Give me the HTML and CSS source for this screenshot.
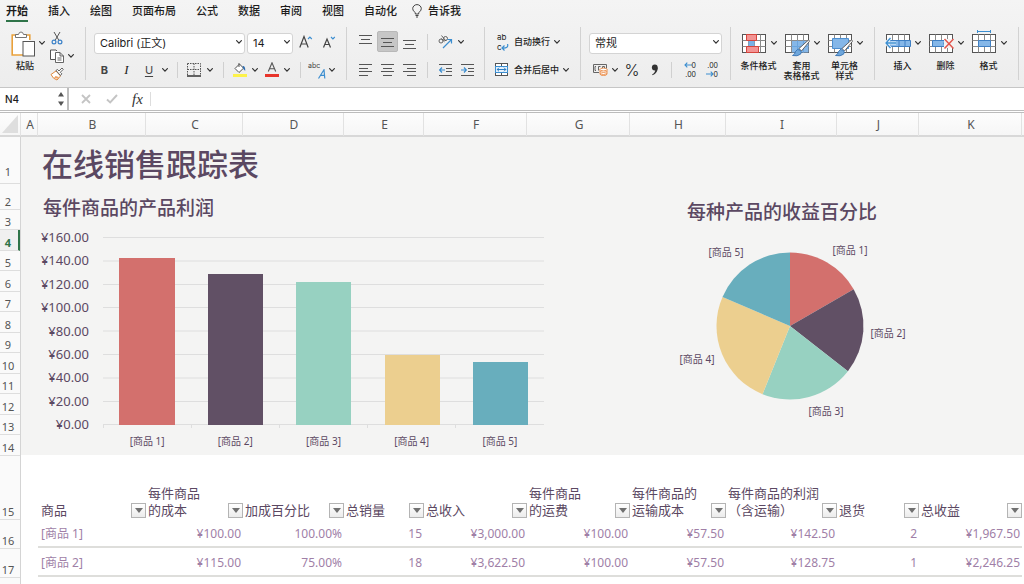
FILE: index.html
```html
<!DOCTYPE html>
<html lang="zh-CN">
<head>
<meta charset="utf-8">
<title>在线销售跟踪表</title>
<link rel="stylesheet" href="styles.css">
</head>
<body>
<svg class="defs" aria-hidden="true">
  <symbol id="chev" viewBox="0 0 6 4"><path d="M.6.6 3 3.1 5.4.6" fill="none" stroke="#333" stroke-width="1.2" stroke-linecap="round"/></symbol>
  <symbol id="table" viewBox="0 0 26 28">
    <rect x="1.5" y="5.5" width="23" height="18" fill="#fff" stroke="#555"/>
    <path d="M1.5 11.5h23M1.5 17.5h23M7.5 5.5v18M13.5 5.5v18M19.5 5.5v18" fill="none" stroke="#8a8a8a"/>
  </symbol>
  <symbol id="brush" viewBox="0 0 18 18">
    <path d="M16.5 1 7 9.5l2.500 2.500L17.300 2.500Q17.500 1 16.500 1z" fill="#fff" stroke="#555" stroke-width=".9"/>
    <path d="M.5 16.500Q3 15.500 3.500 12.500 5 9.500 8 11q2.500 2 .5 4.200-3 2.500-8 1.300z" fill="#6ea6db" stroke="#2f6cae" stroke-width=".8"/>
  </symbol>
</svg>

<header class="ribbon">
  <nav class="tabs">
    <button class="tab active">开始</button>
    <button class="tab">插入</button>
    <button class="tab">绘图</button>
    <button class="tab">页面布局</button>
    <button class="tab">公式</button>
    <button class="tab">数据</button>
    <button class="tab">审阅</button>
    <button class="tab">视图</button>
    <button class="tab">自动化</button>
    <button class="tab tell"><svg width="10" height="14" viewBox="0 0 10 14"><path d="M3.300 10V8.600Q.7 7 .7 4.700a4.300 4.100 0 0 1 8.600 0Q9.300 7 6.700 8.600V10zM3.500 11.500h3M4 13h2" fill="none" stroke="#444" stroke-width="1"/></svg>告诉我</button>
  </nav>

  <div class="groups">
    <section class="group clipboard" aria-label="剪贴板">
      <button class="big paste">
        <span class="pic">
          <svg width="24" height="28" viewBox="0 0 24 28"><path d="M1 6.500h18v20H1z" fill="#fff"/><path d="M7 6H1.200v20H12M13.500 6h5.300v5" fill="none" stroke="#e9a13b" stroke-width="1.600"/><path d="M4.500 8.500V5.500h3Q8 3 10 3t2.500 2.500h3v3z" fill="#fff" stroke="#666" stroke-width=".9"/><rect x="12" y="12.500" width="11.500" height="14.500" fill="#fff" stroke="#555"/></svg>
          <svg class="chev"><use href="#chev"/></svg>
        </span>
        <span class="label">粘贴</span>
      </button>
      <div class="clip-tools">
        <button class="tool" aria-label="剪切"><svg width="12" height="14" viewBox="0 0 12 14"><path d="M3 1 8 9.500M9 1 4 9.500" stroke="#555" fill="none"/><circle cx="3" cy="11" r="1.900" fill="none" stroke="#3c82c8" stroke-width="1.200"/><circle cx="9" cy="11" r="1.900" fill="none" stroke="#3c82c8" stroke-width="1.200"/></svg></button>
        <button class="tool" aria-label="复制"><svg width="14" height="14" viewBox="0 0 14 14"><path d="M5 10.500H.5V1H6l1 1" fill="#fff" stroke="#555"/><path d="M5.500 3.500h4.500l3.500 3.500v6.500h-8zM10 3.500V7h3.500M7.500 9h4M7.500 11h4" fill="#fff" stroke="#555" stroke-width=".9"/></svg></button>
        <button class="tool" aria-label="复制选项"><svg class="chev"><use href="#chev"/></svg></button>
        <button class="tool" aria-label="格式刷"><svg width="14" height="14" viewBox="0 0 14 14"><path d="M1 7.500 6 4l4.500 5L7 13Q3 12 1 7.500z" fill="#fff" stroke="#e0873a"/><path d="m4 11 4 .8 1-1.800-3.500-1z" fill="#eda366"/><path d="m6 3.500 1.500-1L9 4l3-3 1.300 1.300-3 3 1.500 1.500-1.300 1.700z" fill="#fff" stroke="#555" stroke-width=".9"/></svg></button>
      </div>
    </section>

    <section class="group font" aria-label="字体">
      <div class="row font-pick">
        <label class="picker"><select aria-label="字体"><option>Calibri (正文)</option></select><svg class="chev"><use href="#chev"/></svg></label>
        <label class="picker"><select aria-label="字号"><option>14</option></select><svg class="chev"><use href="#chev"/></svg></label>
        <button class="tool" aria-label="增大字号"><svg width="14" height="14" viewBox="0 0 14 14"><path d="M.8 12.500 5 1.500l4.200 11M2.300 9h5.400" fill="none" stroke="#444" stroke-width="1.200"/><path d="m9 4 1.900-2 1.900 2" fill="none" stroke="#3c8ed0" stroke-width="1.100"/></svg></button>
        <button class="tool" aria-label="减小字号"><svg width="14" height="14" viewBox="0 0 14 14"><path d="M1.500 12.500 5 4l3.500 8.500M2.700 9.500h4.600" fill="none" stroke="#444" stroke-width="1.200"/><path d="m9 2 1.900 2 1.900-2" fill="none" stroke="#3c8ed0" stroke-width="1.100"/></svg></button>
      </div>
      <div class="row font-style">
        <button class="tool bold">B</button>
        <button class="tool italic">I</button>
        <button class="tool underline">U</button>
        <button class="tool" aria-label="下划线选项"><svg class="chev"><use href="#chev"/></svg></button>
        <i class="sep"></i>
        <button class="tool" aria-label="边框"><svg width="14" height="14" viewBox="0 0 14 14"><path d="M.5.5h13v12M.5.5v12M.5 6.500h13M7 .5v12" fill="none" stroke="#555" stroke-dasharray="1.500 1"/><path d="M0 13h14" stroke="#333" stroke-width="1.500"/></svg></button>
        <button class="tool" aria-label="边框选项"><svg class="chev"><use href="#chev"/></svg></button>
        <i class="sep"></i>
        <button class="tool" aria-label="填充颜色"><svg width="14" height="15" viewBox="0 0 14 15"><path d="M2 6.500 6.500 2l4 4.200L6 10.500zM6 1v4" fill="#fff" stroke="#555"/><path d="M9.500 4q3-.5 2.700 5Q9.800 7 9.500 4z" fill="#2f6cae"/><path d="M0 12h14v3H0z" fill="#fdf24a"/></svg></button>
        <button class="tool" aria-label="填充选项"><svg class="chev"><use href="#chev"/></svg></button>
        <button class="tool" aria-label="字体颜色"><svg width="14" height="15" viewBox="0 0 14 15"><path d="M3.300 9.500 7 .8l3.700 8.700M4.500 6.800h5" fill="none" stroke="#555" stroke-width="1.100"/><path d="M0 12h14v3H0z" fill="#e8352b"/></svg></button>
        <button class="tool" aria-label="颜色选项"><svg class="chev"><use href="#chev"/></svg></button>
        <i class="sep"></i>
        <button class="tool phonetic" aria-label="拼音指南"><span>abc</span><svg width="8" height="10" viewBox="0 0 8 10"><path d="M.5 9.500 6 .8 6.800 9.500M2.500 6.300h4" fill="none" stroke="#3c8ed0" stroke-width="1.200"/></svg></button>
        <button class="tool" aria-label="拼音选项"><svg class="chev"><use href="#chev"/></svg></button>
      </div>
    </section>

    <section class="group align" aria-label="对齐方式">
      <div class="row align-top">
        <button class="tool" aria-label="顶端对齐"><svg width="13" height="14" viewBox="0 0 13 14"><path d="M0 .5h13M2 4.500h9M0 8.500h13" stroke="#555"/></svg></button>
        <button class="tool pressed" aria-label="垂直居中"><svg width="13" height="14" viewBox="0 0 13 14"><path d="M0 3.500h13M2 7.500h9M0 11.500h13" stroke="#555"/></svg></button>
        <button class="tool" aria-label="底端对齐"><svg width="13" height="14" viewBox="0 0 13 14"><path d="M0 5.500h13M2 9.500h9M0 13.500h13" stroke="#555"/></svg></button>
        <i class="sep"></i>
        <button class="tool" aria-label="方向"><svg width="15" height="14" viewBox="0 0 15 14"><g fill="none" stroke="#555" stroke-width=".9"><circle cx="3" cy="6" r="2"/><path d="m3.200 3.500 3.300 3.300"/><circle cx="7.500" cy="3.500" r="2"/><path d="M3.500.5 8 6"/></g><path d="M5 13 13.500 4.500M9.500 4.500h4v4" fill="none" stroke="#3c8ed0" stroke-width="1.200"/></svg></button>
        <button class="tool" aria-label="方向选项"><svg class="chev"><use href="#chev"/></svg></button>
      </div>
      <div class="row align-side">
        <button class="tool" aria-label="左对齐"><svg width="13" height="12" viewBox="0 0 13 12"><path d="M0 .5h13M0 4.500h9M0 7.500h13M0 11.500h9" stroke="#555"/></svg></button>
        <button class="tool" aria-label="居中"><svg width="13" height="12" viewBox="0 0 13 12"><path d="M0 .5h13M2 4.500h9M0 7.500h13M2 11.500h9" stroke="#555"/></svg></button>
        <button class="tool" aria-label="右对齐"><svg width="13" height="12" viewBox="0 0 13 12"><path d="M0 .5h13M4 4.500h9M0 7.500h13M4 11.500h9" stroke="#555"/></svg></button>
        <i class="sep"></i>
        <button class="tool" aria-label="减少缩进"><svg width="13" height="12" viewBox="0 0 13 12"><path d="M0 .5h13M7 4.500h6M7 7.500h6M0 11.500h13" stroke="#555"/><path d="M6 6H.8M3 3.500.7 6 3 8.500" fill="none" stroke="#3c8ed0" stroke-width="1.200"/></svg></button>
        <button class="tool" aria-label="增加缩进"><svg width="13" height="12" viewBox="0 0 13 12"><path d="M0 .5h13M7 4.500h6M7 7.500h6M0 11.500h13" stroke="#555"/><path d="M0 6h5.200M3 3.500 5.300 6 3 8.500" fill="none" stroke="#3c8ed0" stroke-width="1.200"/></svg></button>
      </div>
    </section>

    <section class="group wrap" aria-label="换行与合并">
      <div class="row"><button class="text-tool"><span class="wrap-icon"><span>ab</span><span>c</span><svg width="8" height="8" viewBox="0 0 8 8"><path d="M6.500 0q1.500 4.500-5.500 4M3.500 1.500 1 4l2.500 2.500" fill="none" stroke="#3c8ed0" stroke-width="1.200"/></svg></span>自动换行<svg class="chev"><use href="#chev"/></svg></button></div>
      <div class="row"><button class="text-tool"><svg width="17" height="13" viewBox="0 0 17 13"><rect x="2.500" y=".5" width="12" height="12" fill="#fff" stroke="#555"/><path d="M8.500 0v13" stroke="#555"/><rect x="2.500" y="3.500" width="12" height="6" fill="#e6f2fc" stroke="#3c8ed0"/><path d="M4 6.500h9M6 4.700 4.200 6.500 6 8.300M11 4.700l1.800 1.800L11 8.300" fill="none" stroke="#2f7fc4"/></svg>合并后居中<svg class="chev"><use href="#chev"/></svg></button></div>
    </section>

    <section class="group number" aria-label="数字">
      <div class="row number-pick"><label class="picker"><select aria-label="数字格式"><option>常规</option></select><svg class="chev"><use href="#chev"/></svg></label></div>
      <div class="row number-style">
        <button class="tool" aria-label="会计格式"><svg width="15" height="12" viewBox="0 0 15 12"><path d="M13.500 5V.5H.5v8H6M3 2.500H2v4h1M5.500 6.500v-4h2M9.500 4V2.500h2V4" fill="none" stroke="#666"/><g fill="#fff" stroke="#e9873f" stroke-width=".9"><path d="M7 5.500v4.500q0 1.500 3.500 1.500T14 10V5.500z"/><ellipse cx="10.500" cy="5.500" rx="3.500" ry="1.400"/><path d="M7 7.700q3.500 1.600 7 0M7 9.700q3.500 1.600 7 0" fill="none"/></g></svg></button>
        <button class="tool" aria-label="会计选项"><svg class="chev"><use href="#chev"/></svg></button>
        <button class="tool percent">%</button>
        <button class="tool" aria-label="千位分隔"><svg width="8" height="12" viewBox="0 0 8 12"><circle cx="3.800" cy="3.500" r="2.900" fill="#333"/><path d="M6.700 3.500Q7 9 1.500 11.200l-.4-.7Q4.500 8.500 4.200 5z" fill="#333"/></svg></button>
        <i class="sep"></i>
        <button class="tool decimals" aria-label="增加小数位数"><span><svg width="8" height="6" viewBox="0 0 8 6"><path d="M8 3H1M3.300.7 1 3l2.300 2.300" fill="none" stroke="#3c8ed0" stroke-width="1.100"/></svg>0</span><span>.00</span></button>
        <button class="tool decimals" aria-label="减少小数位数"><span>.00</span><span><svg width="8" height="6" viewBox="0 0 8 6"><path d="M0 3h7M4.700.7 7 3 4.700 5.300" fill="none" stroke="#3c8ed0" stroke-width="1.100"/></svg>0</span></button>
      </div>
    </section>

    <section class="group bigs" aria-label="样式">
      <button class="big">
        <span class="pic"><svg width="26" height="28" viewBox="0 0 26 28"><use href="#table"/><path d="M7.500 11.500h6v6h-6z" fill="#78b1e6"/><path d="M5.500 5.500h10v6h-10zM5.500 17.500h12v6h-12z" fill="#f29494" stroke="#d6453d"/></svg><svg class="chev"><use href="#chev"/></svg></span>
        <span class="label">条件格式</span>
      </button>
      <button class="big">
        <span class="pic"><svg width="26" height="28" viewBox="0 0 26 28"><use href="#table"/><path d="M8 12h16.500v11.500H8z" fill="#85b7e8"/><path d="M7.500 17.500h17M13.500 11.500v12M19.500 11.500v12" stroke="#6ba5de"/><use href="#brush" x="8" y="10" width="18" height="18"/></svg><svg class="chev"><use href="#chev"/></svg></span>
        <span class="label">套用<br>表格格式</span>
      </button>
      <button class="big">
        <span class="pic"><svg width="26" height="28" viewBox="0 0 26 28"><use href="#table"/><path d="M5.500 9.500h16v10h-16z" fill="#85b7e8" stroke="#4d8fd0"/><use href="#brush" x="8" y="10" width="18" height="18"/></svg><svg class="chev"><use href="#chev"/></svg></span>
        <span class="label">单元格<br>样式</span>
      </button>
    </section>

    <section class="group bigs" aria-label="单元格">
      <button class="big">
        <span class="pic"><svg width="26" height="28" viewBox="0 0 26 28"><use href="#table"/><path d="M5 11.500h20.500v6H5z" fill="#85b7e8" stroke="#3e7fc4"/><path d="M14 11.500v6M20 11.500v6" stroke="#3e7fc4"/><path d="M5.500 9 1 14l4.500 5M1 14h10" fill="none" stroke="#eef6fd" stroke-width="3"/><path d="M5.500 9 1 14l4.500 5M1 14h10" fill="none" stroke="#3c8ed0" stroke-width="1.300"/></svg><svg class="chev"><use href="#chev"/></svg></span>
        <span class="label">插入</span>
      </button>
      <button class="big">
        <span class="pic"><svg width="26" height="28" viewBox="0 0 26 28"><use href="#table"/><path d="M4.500 11.500h13l-2 3 2 3h-13z" fill="#85b7e8" stroke="#3e7fc4"/><path d="M16 10h10v9H16z" fill="#f3f3f3"/><path d="m16.500 10 9 9.500M25.500 10l-9 9.500" stroke="#e2544b" stroke-width="1.500"/></svg><svg class="chev"><use href="#chev"/></svg></span>
        <span class="label">删除</span>
      </button>
      <button class="big">
        <span class="pic"><svg width="26" height="28" viewBox="0 0 26 28"><use href="#table"/><path d="M7.500 11.500h12v6h-12z" fill="#85b7e8" stroke="#3e7fc4"/><path d="M6.500 2.500h13M6.500 1v3M19.500 1v3" stroke="#3c8ed0"/></svg><svg class="chev"><use href="#chev"/></svg></span>
        <span class="label">格式</span>
      </button>
    </section>
  </div>
</header>

<div class="formula-bar">
  <div class="name-box">
    <input type="text" value="N4" aria-label="名称框">
    <svg width="6" height="14" viewBox="0 0 6 14"><path d="M3 0 6 4.500H0zM3 14 6 9.500H0z" fill="#555"/></svg>
  </div>
  <button class="tool" aria-label="取消"><svg width="10" height="10" viewBox="0 0 10 10"><path d="m1 1 8 8M9 1 1 9" stroke="#c4c4c4" stroke-width="1.800"/></svg></button>
  <button class="tool" aria-label="输入"><svg width="12" height="10" viewBox="0 0 12 10"><path d="m1 5.500 3.200 3L11 1" fill="none" stroke="#c4c4c4" stroke-width="1.900"/></svg></button>
  <button class="tool fx">fx</button>
  <input class="formula" type="text" aria-label="编辑栏">
</div>

<main class="sheet">
  <div class="col-heads">
    <span class="corner"><svg width="16" height="18" viewBox="0 0 16 18"><path d="M16 0v18H0z" fill="#dedede"/></svg></span>
    <span>A</span><span>B</span><span>C</span><span>D</span><span>E</span><span>F</span><span>G</span><span>H</span><span>I</span><span>J</span><span>K</span><span></span>
  </div>
  <div class="row-heads">
    <span class="tall">1</span><span>2</span><span>3</span><span class="current">4</span><span>5</span><span>6</span><span>7</span><span>8</span><span>9</span><span>10</span><span>11</span><span>12</span><span>13</span><span>14</span><span>15</span><span>16</span><span>17</span><span></span>
  </div>
  <div class="cells">
    <div class="dashboard">
      <h1>在线销售跟踪表</h1>
      <div class="charts">
        <section class="profit">
          <h2>每件商品的产品利润</h2>
          <div class="bar-chart">
            <div class="axis"><span>¥160.00</span><span>¥140.00</span><span>¥120.00</span><span>¥100.00</span><span>¥80.00</span><span>¥60.00</span><span>¥40.00</span><span>¥20.00</span><span>¥0.00</span></div>
            <svg class="plot" width="441" height="192" viewBox="0 0 441 192">
              <path d="M0 .5h441M0 24h441M0 47.500h441M0 70.500h441M0 94h441M0 117.500h441M0 141h441M0 164.500h441M0 187.500h441M.5 187v4M88.500 187v4M176.500 187v4M264.500 187v4M352.500 187v4" fill="none" stroke="#dedede"/>
              <rect x="16" y="21" width="56" height="167" fill="#d3706d"/>
              <rect x="105" y="37" width="55" height="151" fill="#615065"/>
              <rect x="193" y="45" width="55" height="143" fill="#97d1c1"/>
              <rect x="282" y="118" width="55" height="70" fill="#eccf8f"/>
              <rect x="370" y="125" width="55" height="63" fill="#68aebd"/>
            </svg>
            <div class="names"><span>[商品 1]</span><span>[商品 2]</span><span>[商品 3]</span><span>[商品 4]</span><span>[商品 5]</span></div>
          </div>
        </section>
        <section class="share">
          <h2>每种产品的收益百分比</h2>
          <svg class="pie" width="260" height="190" viewBox="0 0 260 190">
            <path d="M130 91V17.500A73.500 73.500 0 0 1 193.650 54.250z" fill="#d3706d"/>
            <path d="M130 91 193.650 54.250A73.500 73.500 0 0 1 187.900 136.250z" fill="#615065"/>
            <path d="M130 91 187.900 136.250A73.500 73.500 0 0 1 102.500 159.150z" fill="#97d1c1"/>
            <path d="M130 91 102.500 159.150A73.500 73.500 0 0 1 62.500 61.900z" fill="#eccf8f"/>
            <path d="M130 91 62.500 61.900A73.500 73.500 0 0 1 130 17.500z" fill="#68aebd"/>
            <g text-anchor="middle">
              <text x="190" y="19">[商品 1]</text>
              <text x="228" y="102">[商品 2]</text>
              <text x="166" y="180">[商品 3]</text>
              <text x="37" y="128">[商品 4]</text>
              <text x="66" y="21">[商品 5]</text>
            </g>
          </svg>
        </section>
      </div>
    </div>

    <table class="sales">
      <colgroup><col class="c-b"><col class="c-c"><col class="c-d"><col class="c-e"><col class="c-f"><col class="c-g"><col class="c-h"><col class="c-i"><col class="c-j"><col class="c-k"></colgroup>
      <thead>
        <tr>
          <th><div>商品<button class="filter" aria-label="筛选商品"></button></div></th>
          <th><div>每件商品<br>的成本<button class="filter" aria-label="筛选成本"></button></div></th>
          <th><div>加成百分比<button class="filter" aria-label="筛选加成"></button></div></th>
          <th><div>总销量<button class="filter" aria-label="筛选销量"></button></div></th>
          <th><div>总收入<button class="filter" aria-label="筛选收入"></button></div></th>
          <th><div>每件商品<br>的运费<button class="filter" aria-label="筛选运费"></button></div></th>
          <th><div>每件商品的<br>运输成本<button class="filter" aria-label="筛选运输成本"></button></div></th>
          <th><div>每件商品的利润<br>（含运输）<button class="filter" aria-label="筛选利润"></button></div></th>
          <th><div>退货<button class="filter" aria-label="筛选退货"></button></div></th>
          <th><div>总收益<button class="filter" aria-label="筛选收益"></button></div></th>
        </tr>
      </thead>
      <tbody>
        <tr><td>[商品 1]</td><td>¥100.00</td><td>100.00%</td><td>15</td><td>¥3,000.00</td><td>¥100.00</td><td>¥57.50</td><td>¥142.50</td><td>2</td><td>¥1,967.50</td></tr>
        <tr><td>[商品 2]</td><td>¥115.00</td><td>75.00%</td><td>18</td><td>¥3,622.50</td><td>¥100.00</td><td>¥57.50</td><td>¥128.75</td><td>1</td><td>¥2,246.25</td></tr>
      </tbody>
    </table>
  </div>
</main>
</body>
</html>
```
FILE: styles.css
```css
* { box-sizing: border-box; }
body {
  margin: 0;
  height: 100vh;
  display: flex;
  flex-direction: column;
  overflow: hidden;
  background: #fff;
  color: #1c1c1c;
  font-family: "Noto Sans", "Noto Sans CJK SC", sans-serif;
}
button, input, select {
  margin: 0;
  padding: 0;
  border: 0;
  background: none;
  color: inherit;
  font: inherit;
}
svg { display: block; flex: none; }
.defs { position: absolute; width: 0; height: 0; }
.chev { width: 6px; height: 4px; }

/* Ribbon */
.ribbon {
  flex: none;
  background: linear-gradient(#f4f4f4, #ededed);
  border-bottom: 1px solid #c6c6c6;
  font-family: Inter, "Noto Sans CJK SC", sans-serif;
}
.tabs { display: flex; gap: 20px; height: 22px; padding: 0 6px; }
.tab {
  height: 22px;
  padding-top: 2px;
  font-size: 11px;
  line-height: 18px;
  font-weight: 500;
  white-space: nowrap;
  border-bottom: 2px solid transparent;
}
.tab.active { font-weight: 700; border-color: #2f7449; }
.tell { display: flex; align-items: center; gap: 6px; margin-left: -5px; }

.groups { display: flex; height: 65px; padding-top: 5px; }
.group { flex: none; height: 53px; padding: 4px 8px 0; border-right: 1px solid #d2d2d2; }
.row { display: grid; height: 21px; align-items: center; justify-content: start; }
.row + .row { margin-top: 7px; }
.tool { display: flex; align-items: center; justify-content: center; height: 20px; }
.sep { width: 1px; height: 16px; margin: 0 auto; background: #d0d0d0; }
.pressed { height: 21px; background: #c6c6c6; border: 1px solid #b8b8b8; border-radius: 2px; }

.picker { position: relative; display: block; height: 21px; }
.picker select {
  width: 100%;
  height: 21px;
  padding: 0 5px;
  appearance: none;
  background: #fff;
  border: 1px solid #d4d4d4;
  border-radius: 3px;
  font-size: 11px;
}
.picker .chev { position: absolute; right: 3px; top: 9px; }

.big { display: flex; flex-direction: column; align-items: center; width: 43px; gap: 4px; font-size: 9px; line-height: 10px; font-weight: 500; }
.pic { display: flex; align-items: center; gap: 4px; height: 28px; }
.label { white-space: nowrap; }
.bigs { display: flex; align-items: start; padding: 2px 8px 0 6px; }

.clipboard { display: flex; width: 86px; padding: 2px 0 0 6px; }
.paste .label { padding-right: 5px; }
.clip-tools { display: grid; grid-template: repeat(3, 18px) / 16px 12px; }
.clip-tools .tool { height: 18px; }
.clip-tools .tool:first-child { grid-column: 1 / 2; }
.clip-tools .tool:nth-child(2) { grid-column: 1; }

.font { width: 261px; padding-left: 8px; }
.font-pick { grid-template-columns: 151px 46px 21px 21px; column-gap: 2px; }
.font-style { grid-template-columns: 21px 23px 22px 10px 14px 20px 12px 14px 19px 12px 21px 10px 16px 18px 12px; }
.bold { font-size: 11px; font-weight: 700; color: #444; }
.italic { font: italic 13px "Liberation Serif", serif; }
.underline { font-size: 11px; color: #444; text-decoration: underline; text-underline-offset: 2px; }
.phonetic { position: relative; align-items: start; justify-content: start; font-size: 7px; line-height: 12px; color: #444; }
.phonetic svg { position: absolute; right: 0; bottom: 1px; }

.align { width: 138px; }
.align-top { grid-template-columns: 21px 23px 21px 14px 22px 9px; }
.align-top .pressed { margin: 0 1px; }
.align-side { grid-template-columns: 21px 23px 21px 14px 22px 22px; }

.wrap { width: 96px; }
.text-tool { display: flex; align-items: center; gap: 4px; font-size: 9px; font-weight: 500; white-space: nowrap; }
.wrap-icon { position: relative; display: grid; width: 17px; padding-left: 4px; font-size: 8px; line-height: 10px; font-weight: 400; text-align: left; }
.wrap-icon svg { position: absolute; right: 1px; bottom: 0; }

.number { width: 150px; }
.number-pick { grid-template-columns: 133px; }
.number-style { grid-template-columns: 22px 8px 26px 20px 13px 22px 22px; }
.percent { font-size: 16px; font-weight: 300; }
.decimals { flex-direction: column; align-items: end; padding-right: 4px; font-size: 7px; line-height: 9px; }
.decimals span { display: flex; align-items: center; }

/* Formula bar */
.formula-bar {
  flex: none;
  display: grid;
  grid-template-columns: 69px 34px 17px 35px 1fr;
  align-items: center;
  height: 25px;
  background: #fff;
  border-bottom: 3px double #bcbcbc;
}
.name-box { display: flex; align-items: center; height: 22px; padding: 0 3px 0 5px; border-right: 2px solid #bdbdbd; }
.name-box input { flex: 1; min-width: 0; font: 500 10px Inter, sans-serif; }
.fx { font: italic 15px "Liberation Serif", serif; color: #333; }
.formula { height: 14px; margin-left: -5px; padding-left: 6px; border-left: 1px solid #ddd; font-size: 11px; }

/* Sheet */
.sheet {
  flex: 1;
  min-height: 0;
  display: grid;
  grid-template: 24px 1fr / 21px 1fr;
  overflow: hidden;
}
.col-heads {
  grid-column: 1 / 3;
  display: grid;
  grid-template-columns: 21px 17px 108px 97px 101px 80px 103px 103px 96px 111px 82px 103px 1fr;
  background: linear-gradient(#fdfdfd, #f6f6f6);
  border-bottom: 2px solid #d8d8d8;
  font-size: 12px;
  line-height: 23px;
  text-align: center;
  color: #555;
}
.col-heads span { padding-left: 2px; border-right: 1px solid #e2e2e2; }
.corner { padding-top: 2px; }
.row-heads {
  display: grid;
  grid-template-rows: 47px 26px 20px 21px 20px 21px 20px 21px 20px 21px 20px 21px 20px 21px 64px 29px 29px 29px;
  border-right: 1px solid #d4d4d4;
  background: #fafafa;
  color: #555;
  font-size: 11px;
  line-height: 15px;
}
.row-heads span {
  display: flex;
  align-items: end;
  justify-content: center;
  padding-right: 4px;
  border-bottom: 1px solid #dedede;
}
.row-heads .tall { padding-bottom: 4px; }
.row-heads .current { padding-right: 2px; border-right: 2px solid #2f7449; background: #f0f0f0; color: #2f7449; font-weight: 700; }
.cells { min-width: 0; overflow: hidden; }

.dashboard { min-height: 318px; padding-top: 7px; background: #f4f4f3; color: #5b4862; }
h1, h2 { margin: 0; font-weight: 500; white-space: nowrap; }
h1 { padding-left: 21px; font-size: 31px; line-height: 40px; }
h2 { font-size: 19px; line-height: 26px; }
.charts { display: flex; }
.profit { flex: none; width: 560px; padding: 11px 0 0 18px; }
.profit h2 { padding-left: 4px; }
.bar-chart { display: grid; grid-template: 204px 16px / 50px 441px; column-gap: 14px; margin-top: 8px; }
.axis { display: flex; flex-direction: column; justify-content: space-between; font-size: 13px; line-height: 17px; text-align: right; }
.plot { margin-top: 8px; }
.names { grid-column: 2; display: grid; grid-template-columns: repeat(5, 1fr); font-size: 10px; line-height: 16px; text-align: center; }
.share { padding: 15px 0 0 79px; }
.share h2 { padding-left: 27px; }
.pie { margin-top: 10px; font-size: 10px; fill: #5b4862; }

/* Sales table */
.sales { table-layout: fixed; width: 984px; margin-left: 17px; border-collapse: separate; border-spacing: 0; }
.c-b { width: 108px; }
.c-c { width: 97px; }
.c-d { width: 101px; }
.c-e { width: 80px; }
.c-f, .c-g, .c-k { width: 103px; }
.c-h { width: 96px; }
.c-i { width: 111px; }
.c-j { width: 82px; }
.sales th {
  height: 64px;
  padding: 0 0 0 2px;
  vertical-align: bottom;
  color: #5b4862;
  font-size: 13px;
  line-height: 17px;
  font-weight: 400;
  text-align: left;
  white-space: nowrap;
}
.sales th:first-child { padding-left: 3px; }
.sales th div { position: relative; }
.filter {
  position: absolute;
  right: 0;
  bottom: 1px;
  display: grid;
  place-items: center;
  width: 15px;
  height: 15px;
  background: linear-gradient(#fff, #ececec);
  border: 1px solid #b4b4b4;
}
.filter::before { content: ""; border: 4px solid transparent; border-top: 5px solid #707070; border-bottom: 0; }
.sales td {
  height: 29px;
  padding: 3px 2px 0 3px;
  border-bottom: 2px solid #dededb;
  color: #a07fa7;
  font-size: 12px;
  line-height: 16px;
  text-align: right;
}
.sales td:first-child { text-align: left; }
```
